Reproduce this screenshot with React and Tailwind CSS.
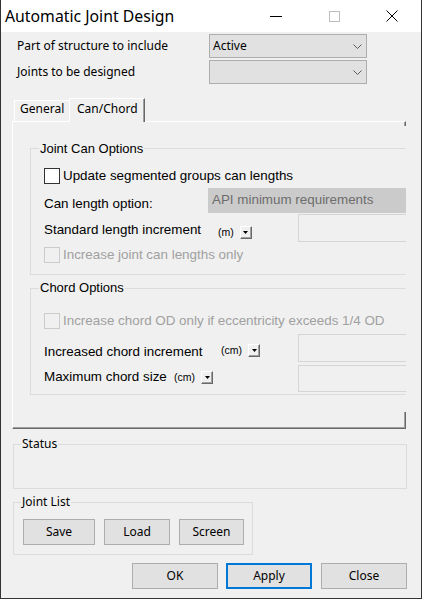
import React from "react";

const seg = "font-['Noto_Sans',sans-serif]";
const ms = "font-['Liberation_Sans',Arial,sans-serif]";

function Chevron() {
  return (
    <svg width="9" height="5" viewBox="0 0 9 5">
      <path d="M0.5 0.5 L4.5 4.5 L8.5 0.5" fill="none" stroke="#5a5a5a" strokeWidth="1" />
    </svg>
  );
}

function Combo({ value }) {
  return (
    <div className="w-[158px] h-[24px] bg-[#e1e1e1] border border-[#adadad] flex items-center justify-between pl-[3px] pr-[4px]">
      <span className="text-[12px] leading-[16px] text-black">{value}</span>
      <Chevron />
    </div>
  );
}

function DropBtn() {
  return (
    <div className="w-[12px] h-[13px] bg-[#f0f0f0] border-t border-l border-white border-r border-b border-r-[#696969] border-b-[#696969] shadow-[inset_-1px_-1px_0_#a0a0a0] flex items-center justify-center">
      <svg width="5" height="3" viewBox="0 0 5 3">
        <path d="M0 0 H5 L2.5 3 Z" fill="#000" />
      </svg>
    </div>
  );
}

function Check({ disabled, label }) {
  return (
    <div className="flex items-start h-[16px]">
      <div
        className={
          disabled
            ? "w-[16px] h-[16px] shrink-0 border border-[#cccccc] bg-[#f0f0f0]"
            : "w-[16px] h-[16px] shrink-0 border border-[#333333] bg-white"
        }
      />
      <span
        className={
          "ml-[3px] text-[13.4px] leading-[15px] whitespace-nowrap " +
          (disabled ? "text-[#a0a0a0]" : "text-black")
        }
      >
        {label}
      </span>
    </div>
  );
}

function EditBox({ h }) {
  return <div className={"w-[110px] shrink-0 border border-[#d5d5d5] bg-[#f0f0f0] " + h} />;
}

function Btn({ children, w, primary }) {
  return (
    <div
      className={
        "h-[26px] flex items-center justify-center bg-[#e1e1e1] text-[12px] leading-[16px] text-black " +
        w +
        (primary ? " border-2 border-[#0078d7]" : " border border-[#adadad]")
      }
    >
      {children}
    </div>
  );
}

export default function App() {
  return (
    <div className={"w-[422px] h-[599px] flex flex-col border-l border-r border-b border-[#333333] bg-[#f0f0f0] overflow-hidden " + seg}>
      {/* Title bar */}
      <div className="h-[32px] shrink-0 bg-white flex items-center">
        <div className="pl-[4px] text-[15.8px] leading-[20px] text-black flex-1 whitespace-nowrap">Automatic Joint Design</div>
        <div className="w-[58px] h-[32px] flex items-center justify-center">
          <svg width="12" height="12" viewBox="0 0 12 12">
            <path d="M0 6.5 H12" stroke="#000" strokeWidth="1" />
          </svg>
        </div>
        <div className="w-[58px] h-[32px] flex items-center justify-center">
          <svg width="11" height="11" viewBox="0 0 11 11">
            <rect x="0.5" y="0.5" width="10" height="10" fill="none" stroke="#bdbdbd" strokeWidth="1" />
          </svg>
        </div>
        <div className="w-[58px] h-[32px] flex items-center justify-center">
          <svg width="12" height="12" viewBox="0 0 12 12">
            <path d="M0.5 0.5 L11.5 11.5 M11.5 0.5 L0.5 11.5" stroke="#000" strokeWidth="1" />
          </svg>
        </div>
      </div>

      {/* Body */}
      <div className="flex-1 flex flex-col">
        <div className="mt-[2px] pl-[16px] flex items-center h-[24px]">
          <div className="w-[192px] text-[12px] leading-[16px] text-black">Part of structure to include</div>
          <Combo value="Active" />
        </div>
        <div className="mt-[2px] pl-[16px] flex items-center h-[24px]">
          <div className="w-[192px] text-[12px] leading-[16px] text-black">Joints to be designed</div>
          <Combo value="" />
        </div>

        {/* Tabs */}
        <div className="mt-[14px] ml-[11px] w-[394px]">
          <div className="flex items-end h-[23px] pl-[2px]">
            <div className="w-[55px] h-[21px] border-t border-l border-white pl-[5px] text-[12px] leading-[16px] text-black">
              General
            </div>
            <div className="relative z-10 w-[76px] h-[24px] -mb-px bg-[#f0f0f0] border-t border-l border-white border-r border-r-[#696969] shadow-[inset_-1px_0_0_#a0a0a0] pl-[7px] pt-[2px] text-[12px] leading-[16px] text-black">
              Can/Chord
            </div>
          </div>
          <div className="h-[308px] border-t border-l border-white border-r border-b border-r-[#696969] border-b-[#696969] shadow-[inset_-1px_-1px_0_#a0a0a0] pt-[4px]">
            <div className={"h-[286px] -mr-px bg-[#f0f0f0] overflow-hidden pt-[22px] pl-[17px] " + ms}>
              {/* Joint Can Options */}
              <div className="relative w-[400px] border border-[#dcdcdc] pb-[11px]">
                <span className="absolute top-[-8px] left-[8px] px-[1px] bg-[#f0f0f0] text-[13px] leading-[15px] text-black">
                  Joint Can Options
                </span>
                <div className="mt-[19px] ml-[13px]">
                  <Check label="Update segmented groups can lengths" />
                </div>
                <div className="mt-[4px] ml-[13px] flex h-[25px]">
                  <div className="w-[164px] shrink-0 pt-[8px] text-[13.4px] leading-[15px] text-black">Can length option:</div>
                  <div className="w-[210px] shrink-0 h-[25px] bg-[#cbcbcb] pl-[4px] pt-[4px] text-[13.4px] leading-[15px] text-[#6d6d6d] whitespace-nowrap">
                    API minimum requirements
                  </div>
                </div>
                <div className="mt-[1px] ml-[13px] flex h-[28px]">
                  <div className="w-[174px] shrink-0 pt-[8px] text-[13.4px] leading-[15px] text-black whitespace-nowrap">Standard length increment</div>
                  <div className="w-[80px] shrink-0 flex items-start pt-[12px]">
                    <span className="text-[10.5px] leading-[12px] text-black">(m)</span>
                    <div className="ml-[6px]">
                      <DropBtn />
                    </div>
                  </div>
                  <EditBox h="h-[28px]" />
                </div>
                <div className="mt-[5px] ml-[13px]">
                  <Check disabled label="Increase joint can lengths only" />
                </div>
              </div>

              {/* Chord Options */}
              <div className="relative mt-[13px] w-[400px] border border-[#dcdcdc] pb-[2px]">
                <span className="absolute top-[-9px] left-[8px] px-[1px] bg-[#f0f0f0] text-[13px] leading-[15px] text-black">
                  Chord Options
                </span>
                <div className="mt-[24px] ml-[13px]">
                  <Check disabled label="Increase chord OD only if eccentricity exceeds 1/4 OD" />
                </div>
                <div className="mt-[5px] ml-[13px] flex h-[28px]">
                  <div className="w-[177px] shrink-0 pt-[10px] text-[13.4px] leading-[15px] text-black whitespace-nowrap">Increased chord increment</div>
                  <div className="w-[77px] shrink-0 flex items-start pt-[10px]">
                    <span className="text-[10.5px] leading-[12px] text-black">(cm)</span>
                    <div className="ml-[6px]">
                      <DropBtn />
                    </div>
                  </div>
                  <EditBox h="h-[28px]" />
                </div>
                <div className="mt-[3px] ml-[13px] flex h-[27px]">
                  <div className="w-[130px] shrink-0 pt-[4px] text-[13.4px] leading-[15px] text-black whitespace-nowrap">Maximum chord size</div>
                  <div className="w-[124px] shrink-0 flex items-start pt-[6px]">
                    <span className="text-[10.5px] leading-[12px] text-black">(cm)</span>
                    <div className="ml-[6px]">
                      <DropBtn />
                    </div>
                  </div>
                  <EditBox h="h-[27px]" />
                </div>
              </div>
            </div>
          </div>
        </div>

        {/* Status */}
        <div className="relative mt-[15px] ml-[12px] w-[394px] h-[45px] border border-[#dcdcdc]">
          <span className="absolute top-[-9px] left-[7px] px-[1px] bg-[#f0f0f0] text-[12px] leading-[16px] text-black">Status</span>
        </div>

        {/* Joint List */}
        <div className="relative mt-[13px] ml-[12px] w-[240px] border border-[#dcdcdc] pt-[16px] pb-[9px] pl-[9px] flex gap-[9px]">
          <span className="absolute top-[-9px] left-[7px] px-[1px] bg-[#f0f0f0] text-[12px] leading-[16px] text-black">Joint List</span>
          <Btn w="w-[72px]">Save</Btn>
          <Btn w="w-[66px]">Load</Btn>
          <Btn w="w-[65px]">Screen</Btn>
        </div>

        {/* Bottom buttons */}
        <div className="mt-[8px] flex justify-end pr-[14px]">
          <Btn w="w-[86px]">OK</Btn>
          <div className="ml-[8px]">
            <Btn w="w-[86px]" primary>Apply</Btn>
          </div>
          <div className="ml-[9px]">
            <Btn w="w-[86px]">Close</Btn>
          </div>
        </div>
      </div>
    </div>
  );
}
